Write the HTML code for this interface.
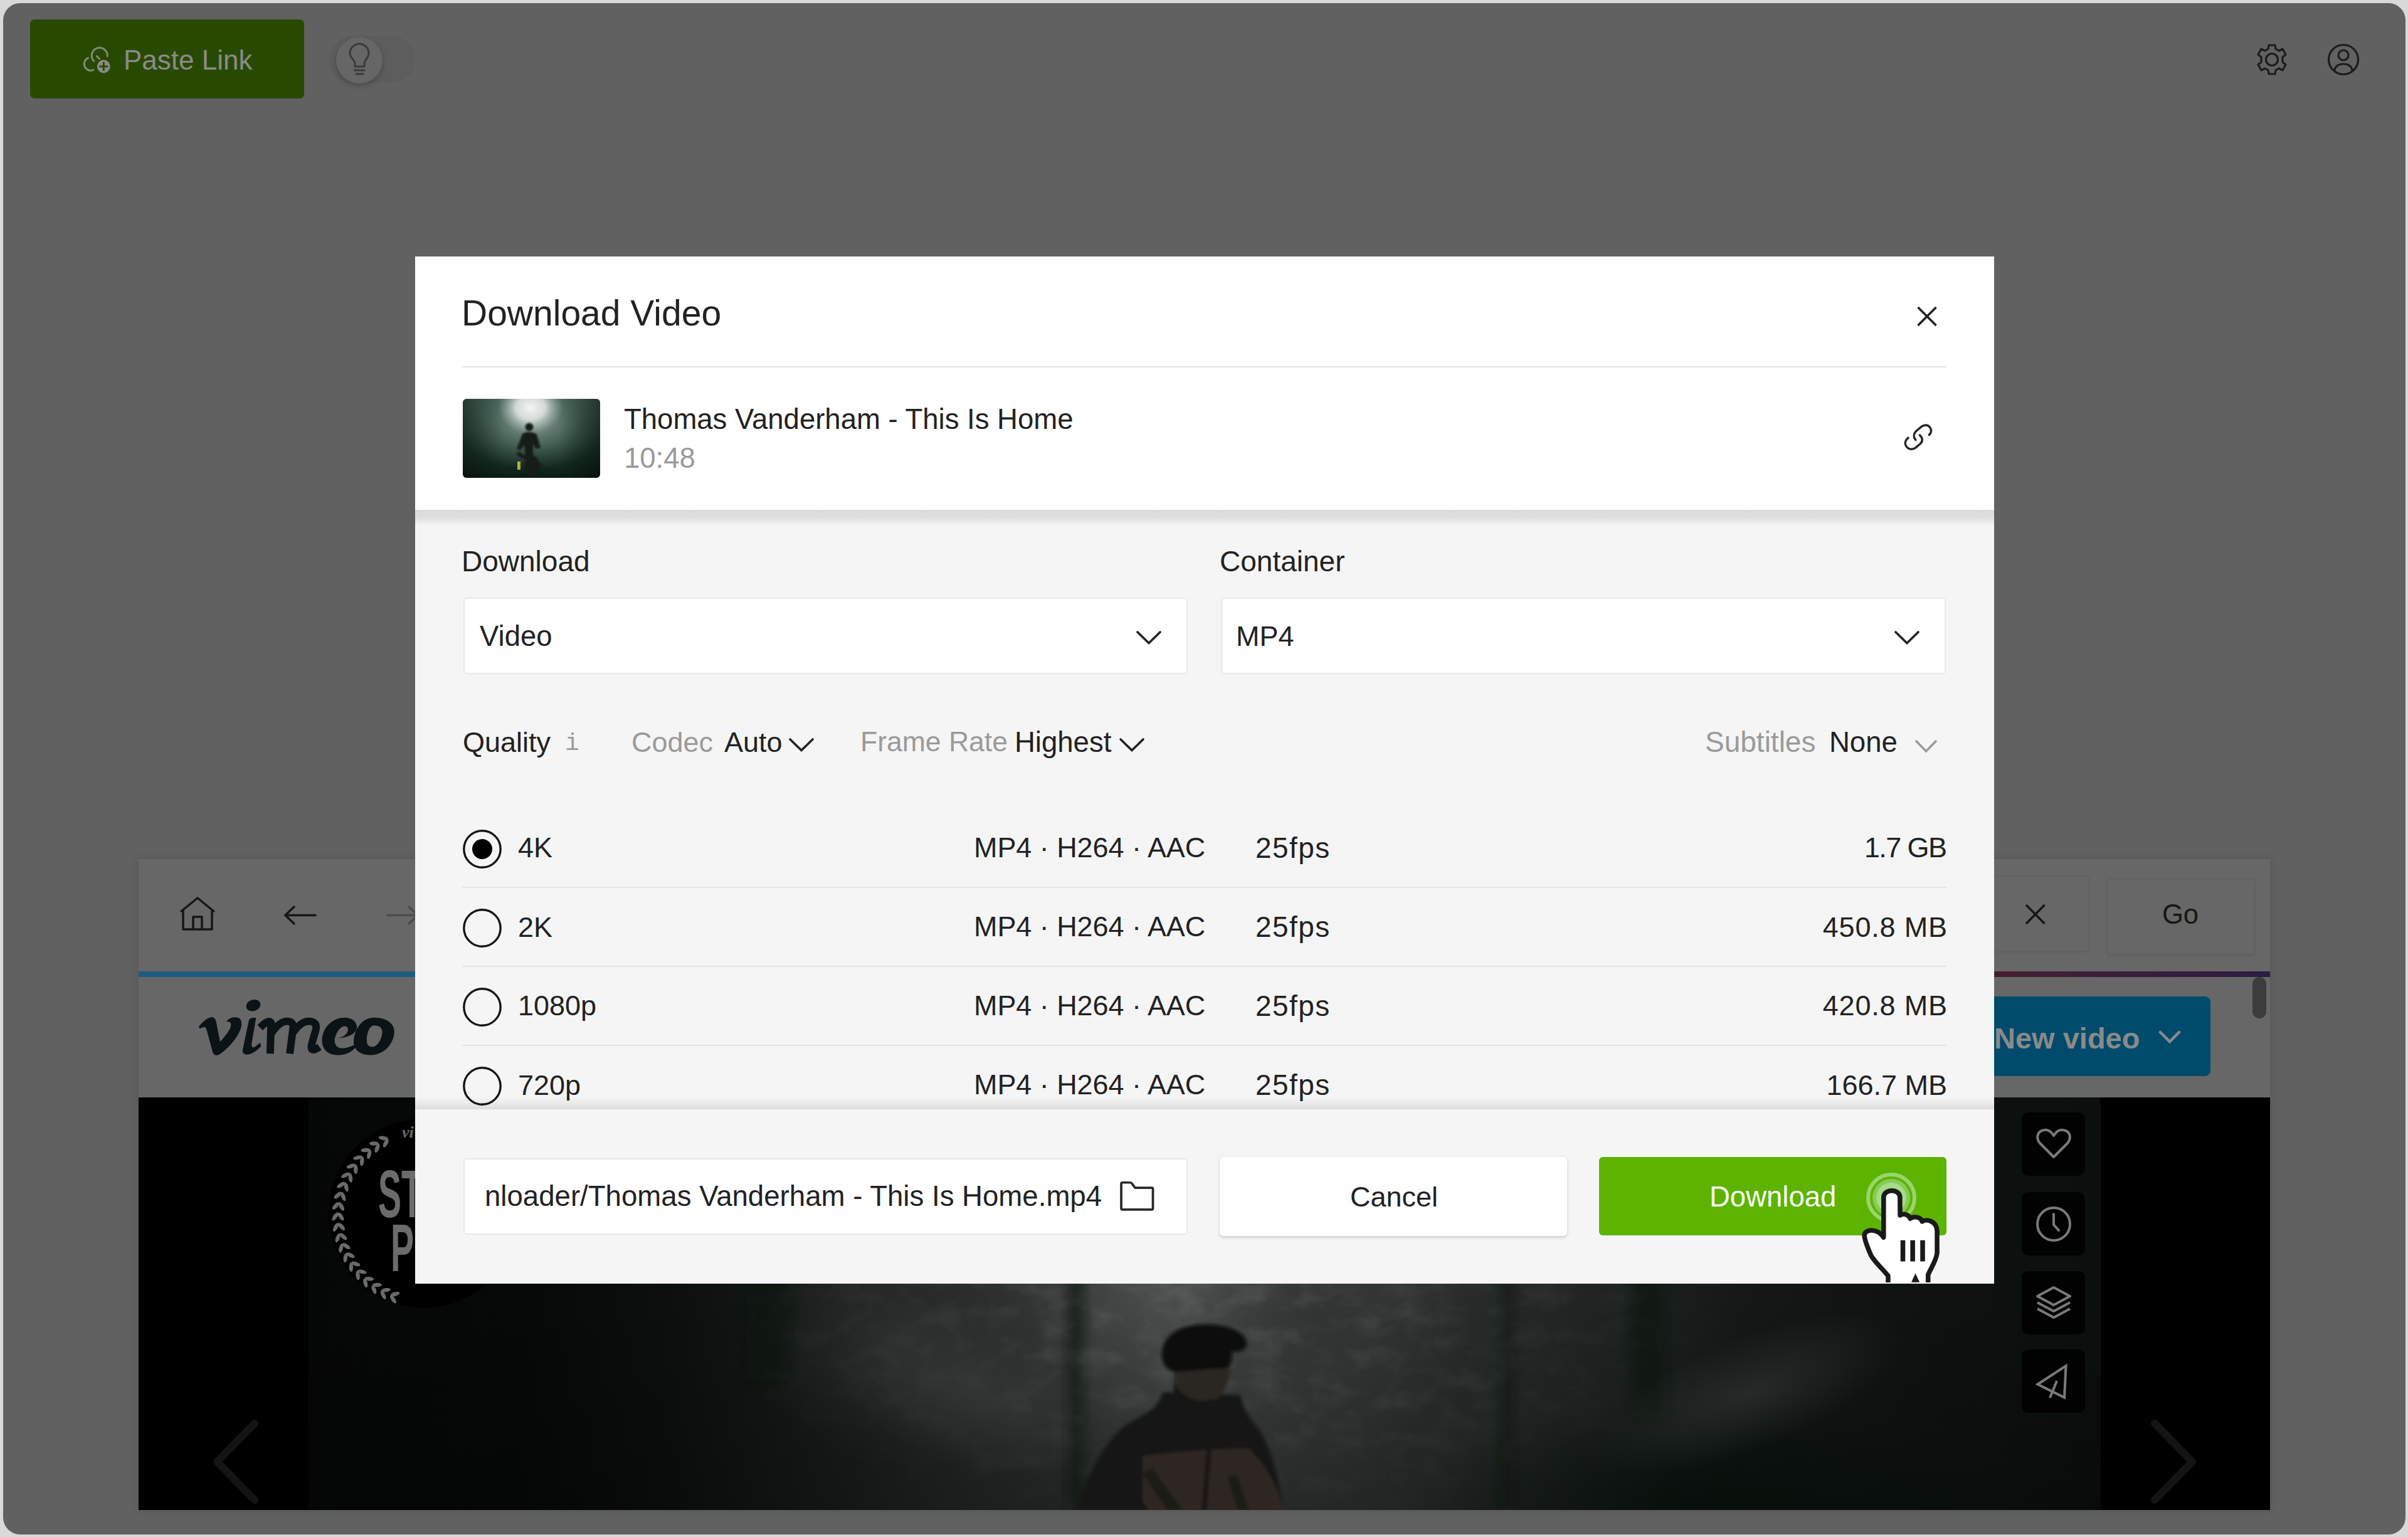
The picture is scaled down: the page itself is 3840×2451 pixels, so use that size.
<!DOCTYPE html>
<html><head><meta charset="utf-8">
<style>
*{box-sizing:border-box}
html,body{margin:0;padding:0}
body{width:3840px;height:2451px;background:#d9d9d9;position:relative;overflow:hidden;font-family:"Liberation Sans", sans-serif;color:#222}
.a{position:absolute;display:block}
.t{position:absolute;white-space:pre;line-height:1}
#win{position:absolute;left:0;top:0;width:3840px;height:2451px;background:#616161;clip-path:inset(5px 4px 4px 5px round 27px)}
</style></head><body>
<div id="win"><div class="a" style="left:48px;top:31px;width:437px;height:126px;background:#284a00;border-radius:7px"></div><svg class="a" style="left:120px;top:50px" width="80" height="80" viewBox="0 0 80 80"><g fill="none" stroke="#7f8a78" stroke-width="3" stroke-linecap="round"><path d="M20.5 42.5 A10 10 0 1 0 28.8 61.6"/><path d="M29.7 47.3 A12.5 12.5 0 1 1 51.2 39.6"/><path d="M34.4 39.6 L38.5 43.7"/></g><circle cx="45.3" cy="56" r="10.4" fill="#8a8a8a"/><path d="M45.3 49 V63 M38.3 56 H52.3" stroke="#284a00" stroke-width="3"/></svg><div class="t" style="left:197px;top:73.8px;font-size:44px;color:#8a8a8a;font-weight:400;">Paste Link</div><div class="a" style="left:524px;top:58px;width:138px;height:74px;background:#5d5d5d;border-radius:37px"></div><div class="a" style="left:536px;top:59px;width:74px;height:74px;border-radius:50%;background:#666;box-shadow:0 4px 10px rgba(0,0,0,.22)"></div><svg class="a" style="left:552px;top:66px" width="42" height="58" viewBox="0 0 42 58"><g fill="none" stroke="#3a3a3a" stroke-width="3" stroke-linecap="round" stroke-linejoin="round"><path d="M14 40 V35 C14 30 6 26 6 19 A15 15 0 0 1 36 19 C36 26 29 30 29 35 V40 Z"/><path d="M13.5 46 H29.5 M16 52 H27"/></g></svg><svg class="a" style="left:3597px;top:69px" width="52" height="52" viewBox="0 0 52 52"><g fill="none" stroke="#1c1c1c" stroke-width="3.2" stroke-linejoin="round"><path d="M21 3 H31 L32 9 L37 12 L43 9 L48 18 L43 22 L43 30 L48 34 L43 43 L37 40 L32 43 L31 49 H21 L20 43 L15 40 L9 43 L4 34 L9 30 L9 22 L4 18 L9 9 L15 12 L20 9 Z"/><circle cx="26" cy="26" r="9.5"/></g></svg><svg class="a" style="left:3711px;top:69px" width="52" height="52" viewBox="0 0 52 52"><g fill="none" stroke="#1c1c1c" stroke-width="3.2"><circle cx="26" cy="26" r="23.5"/><circle cx="26" cy="19" r="8"/><path d="M11.5 44 C13 36 19 33 26 33 C33 33 39 36 40.5 44"/></g></svg><div class="a" style="left:221px;top:1370px;width:3399px;height:1038px;background:#676767;box-shadow:0 0 14px rgba(0,0,0,.12)"></div><svg class="a" style="left:284px;top:1429px" width="62" height="58" viewBox="0 0 62 58"><g fill="none" stroke="#161616" stroke-width="3.5" stroke-linejoin="round"><path d="M4 25 L31 3 L58 25"/><path d="M8 22 V53 H54 V22"/><path d="M24 53 V33 H38 V53"/></g></svg><svg class="a" style="left:452px;top:1443px" width="54" height="33" viewBox="0 0 54 33"><g fill="none" stroke="#161616" stroke-width="3.5" stroke-linecap="round"><path d="M3 16.5 H51 M17 3 L3 16.5 L17 30"/></g></svg><svg class="a" style="left:615px;top:1443px" width="54" height="33" viewBox="0 0 54 33"><g fill="none" stroke="#4c4c4c" stroke-width="3.5" stroke-linecap="round"><path d="M3 16.5 H51 M37 3 L51 16.5 L37 30"/></g></svg><div class="a" style="left:3100px;top:1396px;width:232px;height:123px;background:#676767;border:2px solid #616161;border-radius:6px"></div><svg class="a" style="left:3226px;top:1440px" width="40" height="38" viewBox="0 0 40 38"><g stroke="#161616" stroke-width="3.5" stroke-linecap="butt"><path d="M5 3 L34.5 33 M34.5 3 L5 33"/></g></svg><div class="a" style="left:3359px;top:1401px;width:237px;height:121px;background:#676767;border:2px solid #626262;border-radius:6px;box-shadow:0 2px 4px rgba(0,0,0,.08)"></div><div class="t" style="left:3448px;top:1437.2px;font-size:43.5px;color:#161616;font-weight:400;">Go</div><div class="a" style="left:221px;top:1549px;width:3399px;height:9px;background:linear-gradient(90deg,#1f5b80 0%,#1f5b80 55%,#45202f 87%,#2b1d45 100%)"></div><div class="a" style="left:3592px;top:1558px;width:22px;height:66px;background:#3c3c3c;border-radius:11px"></div><svg class="a" style="left:300px;top:1580px" width="350" height="120" viewBox="0 0 2408 826"><g fill="#0b1316"><path d="M115 395 C150 350 200 300 250 290 C295 285 305 320 315 380 L350 560 C420 480 470 420 470 370 C470 345 450 335 420 340 C440 300 480 290 520 290 C570 290 590 320 585 380 C570 480 460 620 340 700 C300 720 270 700 260 640 L200 420 C190 390 170 390 130 415 Z"/><path d="M600 640 L665 330 C672 300 700 292 745 298 L700 560 C690 610 700 640 740 610 L790 570 L800 610 C740 670 690 700 650 700 C610 700 590 680 600 640 Z"/><ellipse cx="715" cy="160" rx="80" ry="62" transform="rotate(-18 715 160)"/><g fill="none" stroke="#0b1316" stroke-width="82" stroke-linecap="butt" stroke-linejoin="round"><path d="M790 405 Q 880 310 910 350 L 900 690"/><path d="M912 470 Q 1000 335 1085 335 Q 1165 335 1150 420 L 1115 690"/><path d="M1150 460 Q 1240 335 1320 335 Q 1425 335 1400 430 L 1355 590 Q 1335 690 1440 615"/></g><path d="M1470 520 C1490 380 1600 295 1720 295 C1850 300 1870 400 1840 440 C1800 500 1700 520 1610 520 C1600 570 1620 625 1680 630 C1730 635 1790 610 1830 590 L1850 600 C1820 650 1760 705 1640 705 C1540 705 1460 650 1470 520 Z M1610 520 C1640 420 1690 380 1730 390 C1770 400 1760 470 1700 500 C1670 515 1640 520 1610 520 Z" fill-rule="evenodd"/><path d="M2040 295 C2200 295 2280 380 2260 480 C2240 600 2140 705 2000 705 C1860 705 1800 620 1820 520 C1840 400 1920 295 2040 295 Z M2040 380 C1990 380 1960 470 1960 540 C1960 590 1980 615 2020 615 C2080 615 2130 520 2130 450 C2130 400 2090 380 2040 380 Z" fill-rule="evenodd"/></g></svg><div class="a" style="left:2900px;top:1589px;width:625px;height:127px;background:#004b6b;border-radius:9px"></div><div class="t" style="left:3180px;top:1632.2px;font-size:47px;color:#8a8a8a;font-weight:700;">New video</div><svg class="a" style="left:3442px;top:1643px" width="36" height="22" viewBox="0 0 36 22"><path d="M3 3 L18 18 L33 3" fill="none" stroke="#8a8a8a" stroke-width="4.5" stroke-linecap="round"/></svg><div class="a" style="left:221px;top:1750px;width:3399px;height:658px;background:#000"></div><svg class="a" style="left:492px;top:1750px" width="2858" height="658" viewBox="0 0 2858 658"><defs><filter id="bl3" filterUnits="userSpaceOnUse" x="-500" y="-500" width="3900" height="1700"><feGaussianBlur stdDeviation="2.5"/></filter><filter id="bl8" filterUnits="userSpaceOnUse" x="-500" y="-500" width="3900" height="1700"><feGaussianBlur stdDeviation="8"/></filter><linearGradient id="vg" x1="0" x2="2858" y1="0" y2="0" gradientUnits="userSpaceOnUse"><stop offset="0" stop-color="#050706"/><stop offset=".12" stop-color="#060908"/><stop offset=".2" stop-color="#0b0f0e"/><stop offset=".3" stop-color="#181d1b"/><stop offset=".36" stop-color="#222725"/><stop offset=".42" stop-color="#2a2e2d"/><stop offset=".5" stop-color="#333635"/><stop offset=".57" stop-color="#303432"/><stop offset=".65" stop-color="#272c2a"/><stop offset=".73" stop-color="#1e2321"/><stop offset=".8" stop-color="#141917"/><stop offset=".9" stop-color="#0e1311"/><stop offset="1" stop-color="#0b0f0d"/></linearGradient><linearGradient id="vd" x1="0" x2="0" y1="0" y2="1"><stop offset="0" stop-color="#000" stop-opacity="0"/><stop offset=".45" stop-color="#000" stop-opacity=".0"/><stop offset="1" stop-color="#000" stop-opacity=".25"/></linearGradient><radialGradient id="r1"><stop offset="0" stop-color="#5a5b5b" stop-opacity=".9"/><stop offset=".55" stop-color="#4a4c4c" stop-opacity=".45"/><stop offset="1" stop-color="#3a3d3c" stop-opacity="0"/></radialGradient><radialGradient id="r2"><stop offset="0" stop-color="#07110b" stop-opacity=".85"/><stop offset="1" stop-color="#07110b" stop-opacity="0"/></radialGradient><radialGradient id="r3"><stop offset="0" stop-color="#4e5251" stop-opacity=".75"/><stop offset="1" stop-color="#4e5251" stop-opacity="0"/></radialGradient><radialGradient id="r4"><stop offset="0" stop-color="#2e3331" stop-opacity=".8"/><stop offset="1" stop-color="#2e3331" stop-opacity="0"/></radialGradient></defs><rect x="0" y="0" width="2858" height="658" fill="url(#vg)"/><ellipse cx="1420" cy="300" rx="420" ry="420" fill="url(#r1)"/><ellipse cx="1600" cy="330" rx="260" ry="300" fill="url(#r4)"/><ellipse cx="950" cy="380" rx="260" ry="200" fill="url(#r4)"/><ellipse cx="2250" cy="650" rx="500" ry="170" fill="url(#r2)"/><rect x="0" y="0" width="2858" height="658" fill="url(#vd)"/><g filter="url(#bl8)" fill="#0e1211" opacity=".65"><path d="M708 0 L793 0 L760 450 L700 450 Z"/><path d="M2108 280 L2160 280 L2165 510 L2112 510 Z"/><rect x="1210" y="260" width="26" height="398"/><rect x="1905" y="280" width="15" height="378"/></g><filter id="tex" filterUnits="userSpaceOnUse" x="0" y="0" width="2858" height="658"><feTurbulence type="fractalNoise" baseFrequency="0.018 0.03" numOctaves="3" seed="7"/><feColorMatrix type="matrix" values="0 0 0 0 0.35  0 0 0 0 0.37  0 0 0 0 0.36  0 0 0 -2.2 1.25"/></filter><radialGradient id="tm"><stop offset="0" stop-color="#fff" stop-opacity="1"/><stop offset="1" stop-color="#fff" stop-opacity="0"/></radialGradient><mask id="tmask" maskUnits="userSpaceOnUse" x="0" y="0" width="2858" height="658"><rect width="2858" height="658" fill="#000"/><ellipse cx="1450" cy="300" rx="850" ry="420" fill="url(#tm)"/></mask><rect width="2858" height="658" filter="url(#tex)" mask="url(#tmask)" opacity=".2"/><radialGradient id="r5"><stop offset="0" stop-color="#4a4f4d" stop-opacity=".35"/><stop offset="1" stop-color="#4a4f4d" stop-opacity="0"/></radialGradient><ellipse cx="2300" cy="470" rx="260" ry="90" fill="url(#r5)" transform="rotate(-22 2300 470)"/><ellipse cx="1050" cy="470" rx="220" ry="120" fill="url(#r5)" transform="rotate(20 1050 470)"/><g filter="url(#bl3)"><path d="M1224 659 C1235 620 1260 560 1300 525 C1330 505 1355 500 1362 470 L1486 475 C1490 500 1505 515 1516 530 C1540 570 1550 620 1554 659 Z" fill="#141917"/><path d="M1330 572 C1380 565 1440 560 1500 560 C1530 590 1550 630 1554 659 L1330 659 Z" fill="#362e27" opacity=".75"/><path d="M1345 590 L1395 659 L1370 659 L1330 600 Z M1480 600 L1500 659 L1482 659 L1465 605 Z" fill="#161a18" opacity=".8"/><path d="M1300 600 L1340 659 L1224 659 C1240 630 1270 600 1300 600 Z" fill="#141917"/><path d="M1440 560 L1432 659 L1424 659 L1432 560 Z" fill="#121514"/><path d="M1380 400 L1470 400 C1472 440 1465 480 1440 485 C1415 490 1390 480 1380 465 Z" fill="#2b2624"/><path d="M1380 455 C1395 480 1420 490 1445 480 L1450 500 L1380 500 Z" fill="#121514"/><path d="M1362 420 C1355 380 1390 362 1430 362 C1462 362 1490 370 1496 390 C1498 400 1486 408 1472 405 C1474 420 1470 430 1462 432 L1390 437 C1378 440 1365 432 1362 420 Z" fill="#0c0f0e"/></g></svg><div class="a" style="left:524px;top:1784px;width:302px;height:302px;border-radius:50%;background:#000"></div><svg class="a" style="left:500px;top:1780px" width="170" height="320" viewBox="0 0 170 320"><g fill="#6a6a6a"><ellipse cx="130.0" cy="283.6" rx="7.5" ry="3.2" transform="rotate(165.0 130.0 283.6)"/><ellipse cx="126.9" cy="292.0" rx="7.5" ry="3.2" transform="rotate(235.0 126.9 292.0)"/><ellipse cx="115.3" cy="277.2" rx="7.5" ry="3.2" transform="rotate(172.0 115.3 277.2)"/><ellipse cx="111.2" cy="285.2" rx="7.5" ry="3.2" transform="rotate(242.0 111.2 285.2)"/><ellipse cx="101.5" cy="269.0" rx="7.5" ry="3.2" transform="rotate(179.0 101.5 269.0)"/><ellipse cx="96.4" cy="276.5" rx="7.5" ry="3.2" transform="rotate(249.0 96.4 276.5)"/><ellipse cx="88.7" cy="259.2" rx="7.5" ry="3.2" transform="rotate(186.0 88.7 259.2)"/><ellipse cx="82.8" cy="266.0" rx="7.5" ry="3.2" transform="rotate(256.0 82.8 266.0)"/><ellipse cx="77.3" cy="248.0" rx="7.5" ry="3.2" transform="rotate(193.0 77.3 248.0)"/><ellipse cx="70.6" cy="254.0" rx="7.5" ry="3.2" transform="rotate(263.0 70.6 254.0)"/><ellipse cx="67.3" cy="235.4" rx="7.5" ry="3.2" transform="rotate(200.0 67.3 235.4)"/><ellipse cx="59.9" cy="240.6" rx="7.5" ry="3.2" transform="rotate(270.0 59.9 240.6)"/><ellipse cx="58.9" cy="221.7" rx="7.5" ry="3.2" transform="rotate(207.0 58.9 221.7)"/><ellipse cx="50.9" cy="226.0" rx="7.5" ry="3.2" transform="rotate(277.0 50.9 226.0)"/><ellipse cx="52.2" cy="207.1" rx="7.5" ry="3.2" transform="rotate(214.0 52.2 207.1)"/><ellipse cx="43.8" cy="210.4" rx="7.5" ry="3.2" transform="rotate(284.0 43.8 210.4)"/><ellipse cx="47.4" cy="191.8" rx="7.5" ry="3.2" transform="rotate(221.0 47.4 191.8)"/><ellipse cx="38.7" cy="194.0" rx="7.5" ry="3.2" transform="rotate(291.0 38.7 194.0)"/><ellipse cx="44.5" cy="176.0" rx="7.5" ry="3.2" transform="rotate(228.0 44.5 176.0)"/><ellipse cx="35.5" cy="177.1" rx="7.5" ry="3.2" transform="rotate(298.0 35.5 177.1)"/><ellipse cx="43.5" cy="160.0" rx="7.5" ry="3.2" transform="rotate(235.0 43.5 160.0)"/><ellipse cx="34.5" cy="160.0" rx="7.5" ry="3.2" transform="rotate(305.0 34.5 160.0)"/><ellipse cx="44.5" cy="144.0" rx="7.5" ry="3.2" transform="rotate(242.0 44.5 144.0)"/><ellipse cx="35.5" cy="142.9" rx="7.5" ry="3.2" transform="rotate(312.0 35.5 142.9)"/><ellipse cx="47.4" cy="128.2" rx="7.5" ry="3.2" transform="rotate(249.0 47.4 128.2)"/><ellipse cx="38.7" cy="126.0" rx="7.5" ry="3.2" transform="rotate(319.0 38.7 126.0)"/><ellipse cx="52.2" cy="112.9" rx="7.5" ry="3.2" transform="rotate(256.0 52.2 112.9)"/><ellipse cx="43.8" cy="109.6" rx="7.5" ry="3.2" transform="rotate(326.0 43.8 109.6)"/><ellipse cx="58.9" cy="98.3" rx="7.5" ry="3.2" transform="rotate(263.0 58.9 98.3)"/><ellipse cx="50.9" cy="94.0" rx="7.5" ry="3.2" transform="rotate(333.0 50.9 94.0)"/><ellipse cx="67.3" cy="84.6" rx="7.5" ry="3.2" transform="rotate(270.0 67.3 84.6)"/><ellipse cx="59.9" cy="79.4" rx="7.5" ry="3.2" transform="rotate(340.0 59.9 79.4)"/><ellipse cx="77.3" cy="72.0" rx="7.5" ry="3.2" transform="rotate(277.0 77.3 72.0)"/><ellipse cx="70.6" cy="66.0" rx="7.5" ry="3.2" transform="rotate(347.0 70.6 66.0)"/><ellipse cx="88.7" cy="60.8" rx="7.5" ry="3.2" transform="rotate(284.0 88.7 60.8)"/><ellipse cx="82.8" cy="54.0" rx="7.5" ry="3.2" transform="rotate(354.0 82.8 54.0)"/><ellipse cx="101.5" cy="51.0" rx="7.5" ry="3.2" transform="rotate(291.0 101.5 51.0)"/><ellipse cx="96.4" cy="43.5" rx="7.5" ry="3.2" transform="rotate(361.0 96.4 43.5)"/><ellipse cx="115.3" cy="42.8" rx="7.5" ry="3.2" transform="rotate(298.0 115.3 42.8)"/><ellipse cx="111.2" cy="34.8" rx="7.5" ry="3.2" transform="rotate(368.0 111.2 34.8)"/></g><g transform="translate(103,161) scale(0.52,1)"><text x="0" y="0" font-family="Liberation Sans" font-weight="700" font-size="107" fill="#6b6b6b">ST</text></g><g transform="translate(123,247) scale(0.52,1)"><text x="0" y="0" font-family="Liberation Sans" font-weight="700" font-size="107" fill="#6b6b6b">PI</text></g><text x="141" y="34" font-family="Liberation Serif" font-style="italic" font-weight="700" font-size="26" fill="#6b6b6b">vi</text></svg><div class="a" style="left:3224px;top:1774px;width:101px;height:101px;background:#020202;border-radius:10px"></div><div class="a" style="left:3224px;top:1901px;width:101px;height:101px;background:#020202;border-radius:10px"></div><div class="a" style="left:3224px;top:2027px;width:101px;height:101px;background:#020202;border-radius:10px"></div><div class="a" style="left:3224px;top:2152px;width:101px;height:101px;background:#020202;border-radius:10px"></div><svg class="a" style="left:3245px;top:1795px" width="60" height="60" viewBox="0 0 60 60"><path d="M30 50 L8 28 C1 20 4 8 15 7 C22 6 27 11 30 16 C33 11 38 6 45 7 C56 8 59 20 52 28 Z" fill="none" stroke="#7a7a7a" stroke-width="4" stroke-linejoin="round"/></svg><svg class="a" style="left:3245px;top:1922px" width="60" height="60" viewBox="0 0 60 60"><g fill="none" stroke="#7a7a7a" stroke-width="4" stroke-linecap="round"><circle cx="30" cy="30" r="26"/><path d="M30 14 V31 L38 40"/></g></svg><svg class="a" style="left:3245px;top:2047px" width="60" height="60" viewBox="0 0 60 60"><g fill="none" stroke="#7a7a7a" stroke-width="4" stroke-linejoin="round"><path d="M30 6 L56 20 L30 34 L4 20 Z"/><path d="M4 30 L30 44 L56 30"/><path d="M4 40 L30 54 L56 40"/></g></svg><svg class="a" style="left:3245px;top:2172px" width="60" height="62" viewBox="0 0 60 62"><g fill="none" stroke="#7a7a7a" stroke-width="4" stroke-linejoin="miter"><path d="M4.5 35.5 L49.5 6 L47 56.5 Z"/><path d="M35 30 L24 57"/></g></svg><svg class="a" style="left:336px;top:2264px" width="80" height="134" viewBox="0 0 80 134"><path d="M70 6 L10 67 L70 128" fill="none" stroke="#141414" stroke-width="12" stroke-linecap="round" stroke-linejoin="round"/></svg><svg class="a" style="left:3426px;top:2264px" width="80" height="134" viewBox="0 0 80 134"><path d="M10 6 L70 67 L10 128" fill="none" stroke="#141414" stroke-width="12" stroke-linecap="round" stroke-linejoin="round"/></svg></div><div class="a" style="left:662px;top:409px;width:2518px;height:1638px;background:#f5f5f5"></div><div class="a" style="left:662px;top:409px;width:2518px;height:404px;background:#fff"></div><div class="a" style="left:662px;top:813px;width:2518px;height:25px;background:linear-gradient(180deg,#dcdcdc 0%,#dedede 45%,#f5f5f5 100%)"></div><div class="t" style="left:736px;top:470.7px;font-size:57px;color:#222;font-weight:400;">Download Video</div><svg class="a" style="left:3054px;top:486px" width="38" height="38" viewBox="0 0 38 38"><g stroke="#222" stroke-width="3.6" stroke-linecap="butt"><path d="M4.5 4 L33.5 33 M33.5 4 L4.5 33"/></g></svg><div class="a" style="left:737px;top:584px;width:2367px;height:2px;background:#e6e6e6"></div><div class="a" style="left:738px;top:636px;width:219px;height:126px;border-radius:6px;overflow:hidden"><svg width="219" height="126" viewBox="0 0 219 126" style="display:block"><defs><linearGradient id="tg" x1="0" x2="0" y1="0" y2="1"><stop offset="0" stop-color="#3b5c4f"/><stop offset=".55" stop-color="#1f3d30"/><stop offset="1" stop-color="#0c1e15"/></linearGradient><linearGradient id="th" x1="0" x2="1"><stop offset="0" stop-color="#000" stop-opacity=".35"/><stop offset=".3" stop-color="#000" stop-opacity="0"/><stop offset=".7" stop-color="#000" stop-opacity="0"/><stop offset="1" stop-color="#000" stop-opacity=".4"/></linearGradient><radialGradient id="tf"><stop offset="0" stop-color="#f4f5f5"/><stop offset=".45" stop-color="#dfe3e2" stop-opacity=".9"/><stop offset="1" stop-color="#a0b0aa" stop-opacity="0"/></radialGradient><radialGradient id="tf2"><stop offset="0" stop-color="#9fb2ab" stop-opacity=".8"/><stop offset="1" stop-color="#6a8078" stop-opacity="0"/></radialGradient><filter id="tb" x="-50%" y="-50%" width="200%" height="200%"><feGaussianBlur stdDeviation="1.6"/></filter></defs><rect width="219" height="126" fill="url(#tg)"/><ellipse cx="110" cy="38" rx="120" ry="75" fill="url(#tf2)"/><ellipse cx="108" cy="14" rx="52" ry="42" fill="url(#tf)"/><rect width="219" height="126" fill="url(#th)"/><g filter="url(#tb)" fill="#141d19"><circle cx="106" cy="45" r="6.5"/><path d="M95 56 C100 52 112 52 118 57 L124 78 L116 80 L112 72 L112 92 L100 92 L98 74 L92 82 L86 80 Z"/><path d="M88 84 L126 104 L124 110 L86 90 Z"/><ellipse cx="110" cy="106" rx="12" ry="16"/></g><rect x="87" y="100" width="5" height="13" fill="#a8b330"/></svg></div><div class="t" style="left:995px;top:645.5px;font-size:45.5px;color:#222;font-weight:400;">Thomas Vanderham - This Is Home</div><div class="t" style="left:995px;top:707.5px;font-size:45.5px;color:#9a9a9a;font-weight:400;">10:48</div><svg class="a" style="left:3026px;top:666px" width="65" height="65" viewBox="0 0 1537 1537"><g fill="none" stroke="#262626" stroke-width="82" stroke-linecap="round"><path d="M680 840 C600 740 590 600 720 490 L900 340 C1020 250 1160 270 1230 380 C1290 470 1270 570 1190 650"/><path d="M400 760 C290 860 250 990 340 1100 C430 1210 580 1220 700 1120 L860 980 C960 890 950 760 840 660"/></g></svg><div class="t" style="left:736px;top:872.1px;font-size:46px;color:#222;font-weight:400;">Download</div><div class="t" style="left:1945px;top:872.1px;font-size:46px;color:#222;font-weight:400;">Container</div><div class="a" style="left:739px;top:953px;width:1155px;height:122px;background:#fff;border:2px solid #e9e9e9;border-radius:5px"></div><div class="a" style="left:1947px;top:953px;width:1156px;height:122px;background:#fff;border:2px solid #e9e9e9;border-radius:5px"></div><div class="t" style="left:765px;top:991.5px;font-size:45.5px;color:#222;font-weight:400;">Video</div><div class="t" style="left:1971px;top:991.9px;font-size:45px;color:#222;font-weight:400;">MP4</div><svg class="a" style="left:1811px;top:1004px" width="42" height="26" viewBox="0 0 42 26"><path d="M3 4 L21 21.5 L39 4" fill="none" stroke="#222" stroke-width="3.6" stroke-linecap="round" stroke-linejoin="miter"/></svg><svg class="a" style="left:3020px;top:1004px" width="42" height="26" viewBox="0 0 42 26"><path d="M3 4 L21 21.5 L39 4" fill="none" stroke="#222" stroke-width="3.6" stroke-linecap="round" stroke-linejoin="miter"/></svg><div class="t" style="left:738px;top:1160.9px;font-size:45px;color:#222;font-weight:400;">Quality</div><div class="t" style="left:901px;top:1166.8px;font-family:'Liberation Mono';font-size:38px;color:#9a9a9a">i</div><div class="t" style="left:1007px;top:1160.9px;font-size:45px;color:#9a9a9a;font-weight:400;">Codec</div><div class="t" style="left:1155px;top:1160.9px;font-size:45px;color:#222;font-weight:400;">Auto</div><svg class="a" style="left:1257px;top:1175px" width="42" height="26" viewBox="0 0 42 26"><path d="M3 4 L21 21.5 L39 4" fill="none" stroke="#222" stroke-width="3.6" stroke-linecap="round" stroke-linejoin="miter"/></svg><div class="t" style="left:1372px;top:1161.3px;font-size:44.5px;color:#9a9a9a;font-weight:400;">Frame Rate</div><div class="t" style="left:1618px;top:1160.5px;font-size:45.5px;color:#222;font-weight:400;">Highest</div><svg class="a" style="left:1784px;top:1175px" width="42" height="26" viewBox="0 0 42 26"><path d="M3 4 L21 21.5 L39 4" fill="none" stroke="#222" stroke-width="3.6" stroke-linecap="round" stroke-linejoin="miter"/></svg><div class="t" style="left:2719px;top:1160.1px;font-size:46px;color:#9a9a9a;font-weight:400;">Subtitles</div><div class="t" style="left:2917px;top:1160.5px;font-size:45.5px;color:#222;font-weight:400;">None</div><svg class="a" style="left:3052px;top:1178px" width="39" height="24" viewBox="0 0 39 24"><path d="M3 3 L19.5 20 L36 3" fill="none" stroke="#9a9a9a" stroke-width="3.4"/></svg><svg class="a" style="left:735.5px;top:1320.5px" width="66" height="66" viewBox="0 0 66 66"><circle cx="33" cy="33" r="29.2" fill="none" stroke="#161616" stroke-width="3.4"/><circle cx="33" cy="33" r="16" fill="#000"/></svg><div class="t" style="left:826px;top:1329.4px;font-size:45px;color:#222;font-weight:400;">4K</div><div class="t" style="left:1553px;top:1329.5px;font-size:44.9px;color:#222;font-weight:400;">MP4 · H264 · AAC</div><div class="t" style="left:2002px;top:1328.6px;font-size:46px;color:#222;font-weight:400;letter-spacing:1.4px;">25fps</div><div class="t" style="right:736.5999999999999px;top:1329.4px;font-size:45px;color:#222;font-weight:400;letter-spacing:-1.6px;">1.7 GB</div><svg class="a" style="left:735.5px;top:1447px" width="66" height="66" viewBox="0 0 66 66"><circle cx="33" cy="33" r="29.2" fill="none" stroke="#161616" stroke-width="3.4"/></svg><div class="t" style="left:826px;top:1455.9px;font-size:45px;color:#222;font-weight:400;">2K</div><div class="t" style="left:1553px;top:1456.0px;font-size:44.9px;color:#222;font-weight:400;">MP4 · H264 · AAC</div><div class="t" style="left:2002px;top:1455.1px;font-size:46px;color:#222;font-weight:400;letter-spacing:1.4px;">25fps</div><div class="t" style="right:734.1999999999998px;top:1455.9px;font-size:45px;color:#222;font-weight:400;letter-spacing:0.8px;">450.8 MB</div><svg class="a" style="left:735.5px;top:1572.5px" width="66" height="66" viewBox="0 0 66 66"><circle cx="33" cy="33" r="29.2" fill="none" stroke="#161616" stroke-width="3.4"/></svg><div class="t" style="left:826px;top:1581.4px;font-size:45px;color:#222;font-weight:400;">1080p</div><div class="t" style="left:1553px;top:1581.5px;font-size:44.9px;color:#222;font-weight:400;">MP4 · H264 · AAC</div><div class="t" style="left:2002px;top:1580.6px;font-size:46px;color:#222;font-weight:400;letter-spacing:1.4px;">25fps</div><div class="t" style="right:734.1999999999998px;top:1581.4px;font-size:45px;color:#222;font-weight:400;letter-spacing:0.8px;">420.8 MB</div><svg class="a" style="left:735.5px;top:1699px" width="66" height="66" viewBox="0 0 66 66"><circle cx="33" cy="33" r="29.2" fill="none" stroke="#161616" stroke-width="3.4"/></svg><div class="t" style="left:826px;top:1707.9px;font-size:45px;color:#222;font-weight:400;">720p</div><div class="t" style="left:1553px;top:1708.0px;font-size:44.9px;color:#222;font-weight:400;">MP4 · H264 · AAC</div><div class="t" style="left:2002px;top:1707.1px;font-size:46px;color:#222;font-weight:400;letter-spacing:1.4px;">25fps</div><div class="t" style="right:735px;top:1707.9px;font-size:45px;color:#222;font-weight:400;letter-spacing:0px;">166.7 MB</div><div class="a" style="left:737px;top:1414px;width:2367px;height:2px;background:#e4e4e4"></div><div class="a" style="left:737px;top:1540px;width:2367px;height:2px;background:#e4e4e4"></div><div class="a" style="left:737px;top:1666px;width:2367px;height:2px;background:#e4e4e4"></div><div class="a" style="left:662px;top:1748px;width:2518px;height:21px;background:linear-gradient(180deg,rgba(0,0,0,0) 0%,rgba(0,0,0,.03) 40%,rgba(0,0,0,.1) 100%)"></div><div class="a" style="left:739px;top:1847px;width:1155px;height:122px;background:#fff;border:2px solid #e9e9e9;border-radius:5px"></div><div class="t" style="left:773px;top:1884.9px;font-size:45.6px;color:#222;font-weight:400;">nloader/Thomas Vanderham - This Is Home.mp4</div><svg class="a" style="left:1700px;top:1860px" width="200" height="100" viewBox="0 0 2408 1204"><path d="M1060 330 C1060 315 1065 310 1080 310 H1230 C1250 310 1260 320 1270 335 L1325 410 H1645 C1660 410 1668 418 1668 433 V808 C1668 823 1660 830 1645 830 H1083 C1068 830 1060 823 1060 808 Z" fill="none" stroke="#2a2a2a" stroke-width="45" stroke-linejoin="round"/></svg><div class="a" style="left:1945px;top:1845px;width:554px;height:126px;background:#fff;border-radius:6px;box-shadow:0 2px 5px rgba(0,0,0,.18)"></div><div class="t" style="left:2153px;top:1885.9px;font-size:45px;color:#222;font-weight:400;">Cancel</div><div class="a" style="left:2550px;top:1845px;width:554px;height:125px;background:#5db400;border-radius:6px"></div><div class="t" style="left:2726px;top:1885.5px;font-size:45.5px;color:#fbfdf8;font-weight:400;">Download</div><svg class="a" style="left:2970px;top:1864px" width="92" height="92" viewBox="0 0 92 92"><circle cx="46" cy="46" r="37" fill="none" stroke="#9ed87a" stroke-width="6" opacity=".9"/><circle cx="46" cy="46" r="30" fill="#86cc55"/><circle cx="46" cy="46" r="24" fill="#a6dc86"/></svg><svg class="a" style="left:2940px;top:1860px" width="170" height="184.8" viewBox="0 0 1306 1420"><path d="M490 870 L490 380 C490 270 690 270 690 380 L692 600 C730 575 800 585 815 640 C860 605 945 620 962 675 C1010 640 1140 665 1145 790 L1145 1060 C1135 1160 1065 1250 1035 1330 L1035 1480 L545 1480 L545 1340 C480 1260 380 1170 335 1090 C295 1000 265 920 255 860 C245 790 330 770 400 795 C440 810 470 840 490 870 Z" fill="#fff" stroke="#1a1a1a" stroke-width="58" stroke-linejoin="round"/><path d="M726 905 V1165 M846 905 V1165 M968 905 V1165" stroke="#1a1a1a" stroke-width="58"/><path d="M830 1420 L880 1310 L930 1420 Z" fill="#1a1a1a"/></svg>
</body></html>
